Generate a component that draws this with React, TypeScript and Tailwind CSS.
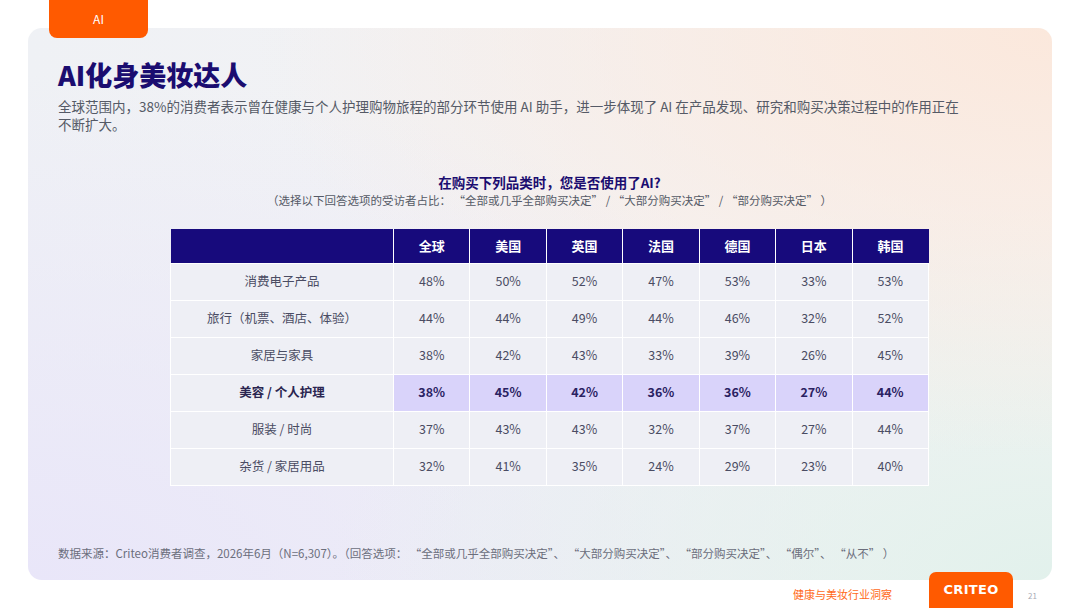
const rows = [
  { name: "消费电子产品", values: ["48%", "50%", "52%", "47%", "53%", "33%", "53%"] },
  { name: "旅行（机票、酒店、体验）", values: ["44%", "44%", "49%", "44%", "46%", "32%", "52%"] },
  { name: "家居与家具", values: ["38%", "42%", "43%", "33%", "39%", "26%", "45%"] },
  { name: "美容 / 个人护理", values: ["38%", "45%", "42%", "36%", "36%", "27%", "44%"], highlight: true },
  { name: "服装 / 时尚", values: ["37%", "43%", "43%", "32%", "37%", "27%", "44%"] },
  { name: "杂货 / 家居用品", values: ["32%", "41%", "35%", "24%", "29%", "23%", "40%"] },
];

const markets = ["全球", "美国", "英国", "法国", "德国", "日本", "韩国"];

export default function App() {
  return (
    <div className="relative h-[608px] w-[1080px] overflow-hidden bg-white font-['Noto_Sans_CJK_SC','Noto_Sans',sans-serif]">
      {/* 顶部标签 */}
      <div className="absolute left-[49px] top-0 z-10 flex h-[38px] w-[99px] items-center justify-center rounded-b-[8px] bg-[#ff5a00] text-[12px] text-white">
        AI
      </div>

      <div className="mx-[28px] mt-[28px] h-[552px] rounded-[14px] bg-[radial-gradient(ellipse_at_top_right,#fbe8dc_0%,transparent_55%),radial-gradient(ellipse_at_bottom_right,#e2f1ec_0%,transparent_50%),radial-gradient(ellipse_at_bottom_left,#e9e6f9_0%,transparent_65%),linear-gradient(90deg,#eff1f5,#f6f4f4)] px-[30px] pt-[30px]">
        <h1 className="text-[27px] font-black leading-[34px] text-[#1b0d70]">AI化身美妆达人</h1>
        <p className="mt-[5px] text-[13.5px] leading-[18px] text-[#555a66]">
          全球范围内，38%的消费者表示曾在健康与个人护理购物旅程的部分环节使用 AI 助手，进一步体现了 AI 在产品发现、研究和购买决策过程中的作用正在
          <br />
          不断扩大。
        </p>

        <div className="ml-[112px] mt-[40px] w-[759px]">
          <div className="text-center text-[13.5px] font-bold leading-[18px] text-[#1b0d70]">
            在购买下列品类时，您是否使用了AI?
          </div>
          <div className="text-center text-[11.5px] leading-[18px] text-[#555a66]">
            （选择以下回答选项的受访者占比： “全部或几乎全部购买决定” / “大部分购买决定” / “部分购买决定” ）
          </div>

          <table className="mt-[20px] w-full table-fixed border-collapse text-center">
            <colgroup>
              <col className="w-[223px]" />
              {markets.map((m) => (
                <col key={m} />
              ))}
            </colgroup>
            <thead>
              <tr className="h-[34px] bg-[#170a7c] text-[13px] font-bold text-white">
                <th className="border-r border-white" />
                {markets.map((m) => (
                  <th key={m} className="border-l border-white font-bold">
                    {m}
                  </th>
                ))}
              </tr>
            </thead>
            <tbody>
              {rows.map((row) => (
                <tr key={row.name} className="h-[37px] text-[12.5px]">
                  <td
                    className={
                      row.highlight
                        ? "border border-white bg-[#eeeff5] font-bold text-[#2a2550]"
                        : "border border-white bg-[#eeeff5] text-[#4a4c63]"
                    }
                  >
                    {row.name}
                  </td>
                  {row.values.map((v, i) => (
                    <td
                      key={i}
                      className={
                        row.highlight
                          ? "border border-white bg-[#d9d3fa] font-bold text-[#2a2262]"
                          : "border border-white bg-[#eeeff5] text-[#4a4c63]"
                      }
                    >
                      {v}
                    </td>
                  ))}
                </tr>
              ))}
            </tbody>
          </table>
        </div>

        <div className="mt-[59px] whitespace-pre text-[11.5px] leading-[16px] text-[#6b6e7c]">
          数据来源：Criteo消费者调查，2026年6月（N=6,307）。（回答选项： “全部或几乎全部购买决定”、 “大部分购买决定”、 “部分购买决定”、 “偶尔”、 “从不” ）
        </div>
      </div>

      {/* 底部 */}
      <div className="flex h-[28px] items-center pl-[793px]">
        <span className="mt-[1px] text-[11px] text-[#ff6a1a]">健康与美妆行业洞察</span>
      </div>
      <div className="absolute left-[929px] top-[572px] flex h-[36px] w-[84px] items-center justify-center rounded-t-[7px] bg-[#ff5a00] font-['DejaVu_Sans',sans-serif] text-[13px] font-black tracking-[0.3px] text-white">
        CRITEO
      </div>
      <span className="absolute left-[1028px] top-[590px] text-[8px] text-[#a8aab4]">21</span>
    </div>
  );
}
